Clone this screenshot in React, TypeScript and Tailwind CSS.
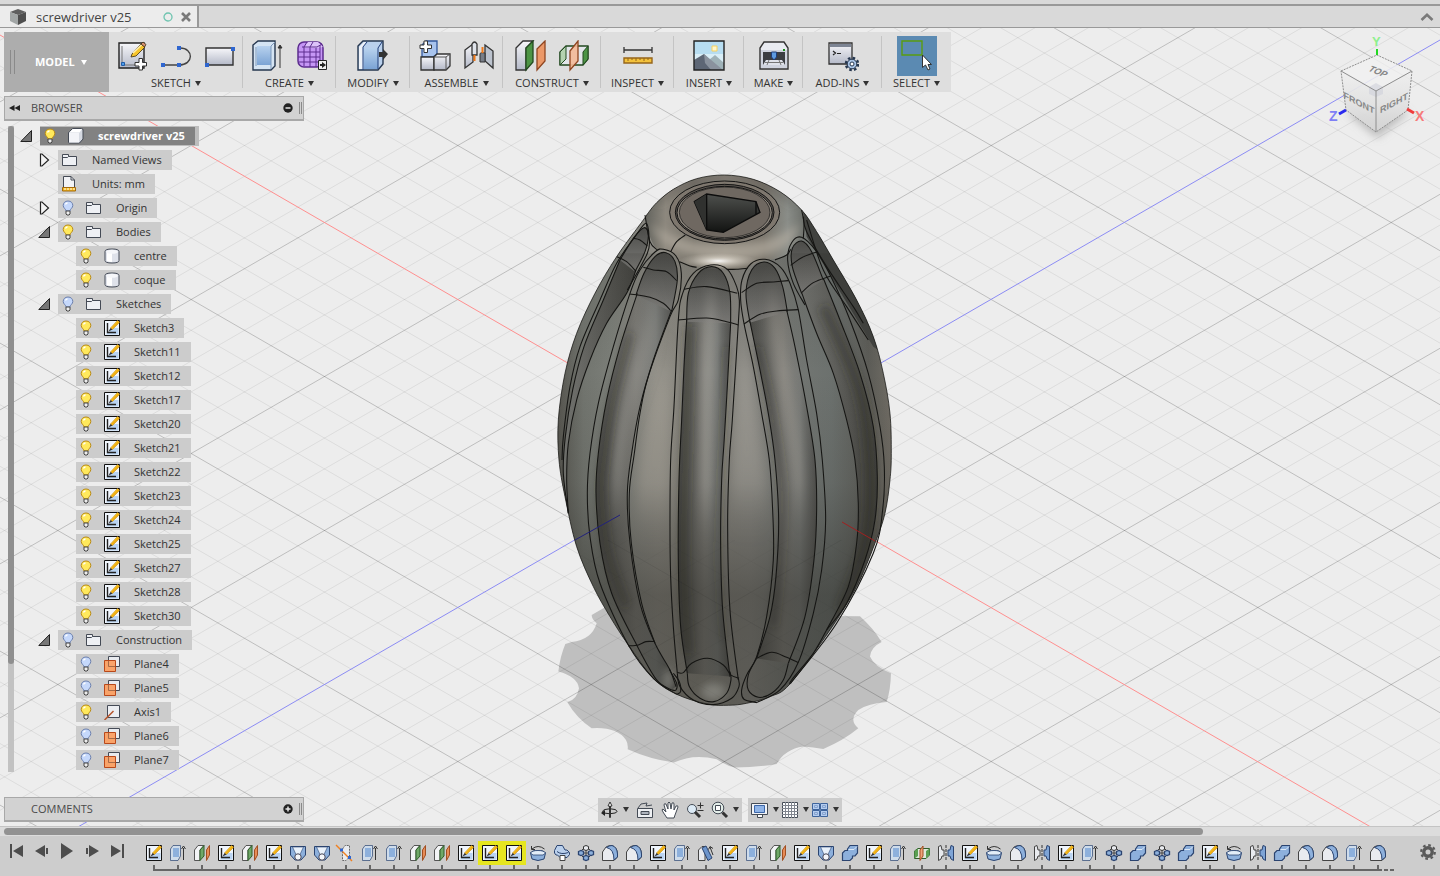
import React from 'react';
import clsx from 'clsx';

type Pt = [number, number];
type IconProps = { className?: string };

// Smooth curve through a list of points
const curve = (pts: Pt[], move = true) => {
  let d = move ? `M${pts[0][0]} ${pts[0][1]}` : `L${pts[0][0]} ${pts[0][1]}`;
  for (let i = 0; i < pts.length - 1; i++) {
    const p0 = pts[i - 1] ?? pts[i];
    const p1 = pts[i];
    const p2 = pts[i + 1];
    const p3 = pts[i + 2] ?? p2;
    d += `C${p1[0] + (p2[0] - p0[0]) / 6} ${p1[1] + (p2[1] - p0[1]) / 6} ${p2[0] - (p3[0] - p1[0]) / 6} ${p2[1] - (p3[1] - p1[1]) / 6} ${p2[0]} ${p2[1]}`;
  }
  return d;
};

const band = (a: Pt[], b: Pt[]) => curve(a) + curve([...b].reverse(), false) + 'Z';

/* ---------- ground grid ---------- */

const ORIGIN = { x: 724.5, y: 453.5 };
const SLOPE = 0.5775;
const STEP = 30.8;

const gridPath = (major: boolean) => {
  let d = '';
  for (let k = -45; k <= 45; k++) {
    if (k === 0 || (k % 5 === 0) !== major) continue;
    const y = ORIGIN.y + k * STEP;
    const l = SLOPE * ORIGIN.x;
    const r = SLOPE * (1440 - ORIGIN.x);
    d += `M0 ${y - l}L1440 ${y + r}M0 ${y + l}L1440 ${y - r}`;
  }
  return d;
};

const Grid = () => (
  <g fill="none">
    <path d={gridPath(false)} stroke="#000" strokeOpacity=".07" />
    <path d={gridPath(true)} stroke="#000" strokeOpacity=".2" />
  </g>
);

/* ---------- handle model ---------- */

const outline: Pt[] = [
  [320, 165], [350, 128], [400, 88], [470, 56], [553, 45], [640, 58], [720, 95], [785, 150], [830, 215], [880, 300], [950, 420],
  [1000, 530], [1030, 640], [1050, 760], [1054, 880], [1050, 960], [1035, 1060], [1005, 1150], [950, 1280], [870, 1410], [750, 1572],
  [690, 1610], [620, 1630], [565, 1636], [500, 1632], [410, 1603], [340, 1555], [265, 1455], [210, 1370], [160, 1280], [110, 1160],
  [75, 1010], [57, 900], [55, 780], [75, 640], [110, 520], [165, 400], [230, 290], [310, 180], [320, 165],
];

const shadow =
  'M190 1345L155 1365Q155 1378 170 1390Q155 1440 95 1446L76 1452Q60 1490 55 1535Q112 1550 117 1585Q112 1618 82 1627Q110 1675 155 1705Q230 1700 258 1740Q265 1752 263 1768Q330 1798 402 1808Q460 1780 530 1798Q560 1818 585 1823Q650 1823 710 1812Q735 1768 790 1760Q820 1762 850 1767Q910 1742 955 1705Q925 1680 955 1650Q985 1630 1040 1626Q1052 1590 1053 1540Q1003 1520 990 1490Q992 1462 1025 1446Q1000 1405 960 1369L860 1368L500 1200Z';

const centerL: Pt[] = [[440, 480], [432, 620], [425, 780], [417, 960], [415, 1200], [422, 1400], [442, 1540]];
const centerR: Pt[] = [[572, 490], [562, 680], [552, 850], [545, 960], [542, 1150], [548, 1350], [570, 1550]];
const leftL: Pt[] = [[292, 400], [240, 560], [200, 720], [175, 880], [168, 1000], [180, 1150], [215, 1300], [290, 1455], [350, 1560], [395, 1590]];
const leftR: Pt[] = [[395, 450], [340, 600], [300, 740], [275, 880], [262, 1000], [270, 1150], [300, 1330], [345, 1450], [390, 1530], [408, 1580]];
const rightL: Pt[] = [[630, 485], [660, 630], [685, 760], [705, 900], [716, 1080], [708, 1250], [690, 1370], [650, 1495]];
const rightR: Pt[] = [[740, 450], [765, 560], [800, 740], [825, 900], [830, 1050], [822, 1200], [795, 1370], [745, 1510]];
const right2L: Pt[] = [[785, 398], [830, 520], [880, 640], [920, 780], [945, 900], [955, 1030], [950, 1150], [925, 1280], [860, 1410]];
const right2R: Pt[] = [[850, 355], [900, 480], [960, 640], [1000, 800], [1012, 950], [1005, 1080], [975, 1200], [920, 1330], [860, 1410]];
const left2L: Pt[] = [[240, 300], [190, 420], [132, 560], [98, 690], [76, 830], [70, 940], [85, 1060]];
const left2R: Pt[] = [[288, 330], [260, 400], [200, 490], [150, 600], [110, 720], [85, 850], [80, 960], [85, 1060]];

const centerArch: Pt[] = [[440, 485], [445, 400], [475, 340], [515, 320], [550, 340], [570, 400], [572, 490]];
const leftArch: Pt[] = [[288, 405], [312, 340], [345, 290], [378, 278], [405, 305], [412, 360], [395, 455]];
const rightArch: Pt[] = [[630, 488], [618, 400], [635, 330], [672, 306], [705, 325], [728, 380], [742, 455]];
const right2Arch: Pt[] = [[785, 400], [757, 320], [757, 265], [785, 243], [815, 275], [850, 360]];
const left2Arch: Pt[] = [[240, 300], [280, 235], [312, 203], [325, 225], [315, 275], [285, 335]];

const edges: Pt[][] = [
  centerL, centerR, leftL, leftR, rightL, rightR, right2L, right2R, left2L, left2R,
  centerArch, leftArch, rightArch, right2Arch, left2Arch,
  // outer rims of the flutes
  [[412, 1540], [400, 1400], [392, 1250], [390, 1100], [392, 900], [402, 740], [415, 480], [428, 400], [460, 340], [512, 315], [562, 328], [590, 380], [598, 420], [595, 490], [577, 780], [568, 900], [563, 1100], [570, 1350], [595, 1560]],
  [[410, 1603], [340, 1555], [265, 1455], [180, 1270], [150, 1130], [142, 1000], [150, 880], [175, 730], [220, 560], [270, 400], [300, 330], [345, 276], [370, 268], [408, 288], [424, 340], [415, 420], [390, 470], [325, 650], [300, 760], [283, 880], [268, 1000], [274, 1150], [305, 1330], [345, 1450]],
  [[650, 1628], [612, 1618], [605, 1590], [620, 1545], [650, 1490], [680, 1370], [700, 1200], [698, 1050], [688, 900], [665, 760], [640, 620], [612, 490], [602, 420], [606, 360], [632, 312], [675, 298], [722, 322], [750, 370], [775, 450], [800, 600], [830, 760], [847, 900], [857, 1080], [845, 1230], [820, 1360], [775, 1507], [720, 1590], [650, 1628]],
  [[795, 435], [760, 370], [743, 300], [755, 248], [785, 232], [830, 275], [872, 348], [930, 480], [985, 640], [1020, 800], [1033, 920], [1028, 1050], [1000, 1180], [890, 1390], [752, 1570]],
  [[66, 900], [70, 830], [90, 680], [120, 560], [180, 420], [230, 310], [285, 230], [318, 190], [327, 230], [322, 280], [262, 390]],
  [[800, 180], [850, 330], [920, 440], [985, 540]],
  [[790, 170], [800, 215], [860, 320], [940, 440], [970, 490]],
  // cross sections near the top
  [[432, 388], [500, 380], [592, 400]],
  [[415, 480], [500, 474], [560, 485], [595, 495]],
  [[310, 322], [340, 330], [380, 335], [410, 362]],
  [[270, 402], [330, 412], [370, 430], [392, 452]],
  [[605, 398], [650, 370], [700, 366], [745, 362]],
  [[612, 492], [660, 463], [710, 453], [775, 449]],
  [[752, 316], [785, 293], [832, 275]],
  [[785, 398], [820, 368], [872, 348]],
  [[280, 235], [300, 240], [322, 258]],
  [[230, 290], [260, 305], [287, 333]],
  // bottom caps
  [[412, 1538], [430, 1538], [455, 1510], [503, 1495], [550, 1515], [572, 1545], [597, 1555]],
  [[442, 1540], [448, 1580], [480, 1615], [522, 1625], [560, 1600], [573, 1560], [570, 1535]],
  [[412, 1540], [420, 1580], [460, 1620], [520, 1634], [575, 1615], [597, 1580], [595, 1555]],
  [[650, 1495], [695, 1477], [740, 1492], [775, 1508]],
  [[650, 1495], [625, 1545], [625, 1590], [655, 1612], [695, 1600], [730, 1560], [745, 1510]],
  [[265, 1458], [295, 1455], [318, 1445], [345, 1445]],
  [[395, 1590], [408, 1590], [410, 1570], [388, 1528]],
  [[410, 1603], [422, 1595], [418, 1565], [400, 1540]],
  [[860, 1410], [820, 1480], [755, 1560], [752, 1572]],
  // edge under the cap
  [[315, 165], [330, 245], [352, 270]],
  [[418, 305], [450, 318], [470, 322]],
  [[560, 328], [590, 328], [622, 325]],
  [[705, 300], [740, 285], [752, 268]],
  [[785, 150], [792, 190], [790, 235]],
  [[392, 275], [410, 245], [436, 225]],
];

const Stops = ({ list }: { list: [number, string][] }) => (
  <>
    {list.map(([offset, color]) => (
      <stop key={offset} offset={offset} stopColor={color} />
    ))}
  </>
);

const Handle = () => (
  <g transform="translate(540 160) scale(.3333)">
    <defs>
      <linearGradient id="shell" x1="50" x2="1055" y1="0" y2="0" gradientUnits="userSpaceOnUse">
        <Stops list={[[0, '#55544e'], [0.08, '#72756f'], [0.16, '#7b7e78'], [0.3, '#8c8a83'], [0.42, '#86847c'], [0.58, '#868580'], [0.7, '#747773'], [0.82, '#6c716e'], [0.93, '#5c5c57'], [1, '#716d65']]} />
      </linearGradient>
      <linearGradient id="flute">
        <Stops list={[[0, '#4b4b47'], [0.2, '#5f5f5b'], [0.5, '#7b7a75'], [0.75, '#777976'], [1, '#51514e']]} />
      </linearGradient>
      <linearGradient id="fluteTop" x1="0" x2="0" y1="0" y2="1">
        <Stops list={[[0, '#4b4b48'], [0.5, '#646461'], [1, '#7c7b78']]} />
      </linearGradient>
      <linearGradient id="fluteSide">
        <Stops list={[[0, '#747571'], [0.6, '#575753'], [1, '#444440']]} />
      </linearGradient>
      <linearGradient id="depth" x1="0" x2="0" y1="300" y2="1640" gradientUnits="userSpaceOnUse">
        <stop offset="0" stopColor="#22211c" stopOpacity=".12" />
        <stop offset=".25" stopColor="#22211c" stopOpacity="0" />
        <stop offset=".5" stopColor="#22211c" stopOpacity=".1" />
        <stop offset=".75" stopColor="#22211c" stopOpacity=".45" />
        <stop offset="1" stopColor="#22211c" stopOpacity=".42" />
      </linearGradient>
      <linearGradient id="cap" x1="320" x2="790" y1="0" y2="0" gradientUnits="userSpaceOnUse">
        <Stops list={[[0, '#65655f'], [0.12, '#8d887e'], [0.3, '#77736a'], [0.5, '#8a857b'], [0.75, '#777269'], [0.9, '#8a8d88'], [1, '#6d706b']]} />
      </linearGradient>
      <radialGradient id="shine">
        <stop offset="0" stopColor="#fff" stopOpacity=".95" />
        <stop offset=".4" stopColor="#e6e0d5" stopOpacity=".6" />
        <stop offset="1" stopColor="#c9c2b5" stopOpacity="0" />
      </radialGradient>
      <linearGradient id="socket" x1="0" x2="0" y1="0" y2="1">
        <Stops list={[[0, '#4e504d'], [1, '#121312']]} />
      </linearGradient>
      <clipPath id="body">
        <path d={curve(outline)} />
      </clipPath>
      <filter id="soft" filterUnits="userSpaceOnUse" x="0" y="0" width="1110" height="1700">
        <feGaussianBlur stdDeviation="12" />
      </filter>
      <filter id="softer" filterUnits="userSpaceOnUse" x="0" y="0" width="1110" height="1700">
        <feGaussianBlur stdDeviation="14 60" />
      </filter>
    </defs>

    <path d={curve(outline)} fill="url(#shell)" />
    <g clipPath="url(#body)">
      <path d={curve([[345, 640], [320, 760], [303, 880], [290, 1000], [294, 1050]]) + 'L385 1050L388 900L395 640Z'} fill="#aaa69b" fillOpacity=".55" filter="url(#softer)" />
      <path d="M600 560L580 900L578 1020L685 1020L670 900L630 640Z" fill="#aba79f" fillOpacity=".5" filter="url(#softer)" />
      <path d="M788 150L800 230L870 345L1000 560L1060 600L1000 350L830 150Z" fill="#41423f" />
      {[[left2L, left2R, left2Arch], [right2L, right2R, right2Arch]].map(([l, r, arch], i) => (
        <g key={i}>
          <path d={band(l, r)} fill="url(#fluteSide)" />
          <path d={curve(arch) + 'Z'} fill="url(#fluteTop)" />
        </g>
      ))}
      {[[leftL, leftR, leftArch], [centerL, centerR, centerArch], [rightL, rightR, rightArch]].map(([l, r, arch], i) => (
        <g key={i}>
          <path d={band(l, r)} fill="url(#flute)" />
          <path d={curve(arch) + 'Z'} fill="url(#fluteTop)" />
        </g>
      ))}
      {/* soft reflections running down the flutes */}
      <g fill="none" filter="url(#softer)" strokeOpacity=".5">
        <path d={curve([[350, 460], [300, 620], [255, 760], [235, 900], [228, 1020]])} stroke="#b0aea8" strokeWidth="28" />
        <path d={curve([[515, 420], [505, 620], [500, 850], [498, 1060]])} stroke="#bab8b2" strokeWidth="28" />
        <path d={curve([[690, 440], [730, 640], [765, 850], [780, 1020]])} stroke="#b3aea6" strokeWidth="26" />
      </g>
      <g fill="none" filter="url(#soft)" strokeOpacity=".45">
        <path d={curve([[270, 520], [220, 720], [192, 900], [185, 1000], [205, 1180], [260, 1340]])} stroke="#2b2b28" strokeWidth="20" />
        <path d={curve([[448, 500], [440, 800], [432, 1200], [445, 1480]])} stroke="#2b2b28" strokeWidth="22" />
        <path d={curve([[560, 560], [545, 900], [535, 1200], [550, 1440]])} stroke="#2b2b28" strokeWidth="10" />
        <path d={curve([[650, 560], [695, 760], [726, 980], [720, 1200], [700, 1400]])} stroke="#2b2b28" strokeWidth="18" />
        <path d={curve([[850, 440], [960, 700], [990, 950], [975, 1150], [900, 1350]])} stroke="#2b2b28" strokeWidth="30" />
      </g>
      <path d="M0 280H1110V1700H0Z" fill="url(#depth)" />
      <ellipse cx="520" cy="1595" rx="36" ry="26" fill="#a0a09a" fillOpacity=".5" filter="url(#soft)" />
      <ellipse cx="385" cy="1560" rx="14" ry="34" fill="#a0a09a" fillOpacity=".6" filter="url(#soft)" />
      {/* cap */}
      <path d="M320 160Q390 50 553 45Q710 50 785 150Q795 190 790 232Q745 260 740 285Q705 300 675 300Q640 305 622 325L560 328Q515 312 470 322Q440 318 418 305Q400 270 370 268L352 270Q325 240 315 165Z" fill="url(#cap)" />
      <path d="M330 190Q360 260 470 290Q560 315 680 285Q760 260 780 190Q700 255 550 255Q400 250 330 190Z" fill="#b8b1a4" fillOpacity=".65" filter="url(#soft)" />
      <path d="M350 128Q430 60 553 52Q680 55 760 130" fill="none" stroke="#55544e" strokeWidth="14" strokeOpacity=".6" filter="url(#soft)" />
      <ellipse cx="535" cy="303" rx="120" ry="24" fill="url(#shine)" />
      <ellipse cx="554" cy="157" rx="165" ry="94" fill="#7e776e" stroke="#141414" strokeWidth="3" />
      <ellipse cx="554" cy="157" rx="148" ry="84" fill="#5c5751" stroke="#141414" strokeWidth="3" />
      <ellipse cx="554" cy="158" rx="143" ry="79" fill="#8c857c" stroke="#141414" strokeWidth="3" />
      <ellipse cx="554" cy="157" rx="136" ry="76" fill="#6f6861" stroke="#141414" strokeWidth="2" />
      <path d="M463 125L500 102L648 125L660 157L550 217L500 210Z" fill="url(#socket)" stroke="#0c0c0c" strokeWidth="4" />
      <path d="M463 125L500 102V210Z" fill="#30312f" />
      <path d="M500 102V210M648 125V162" stroke="#0c0c0c" strokeWidth="4" />
    </g>
    <g fill="none" stroke="#151513" strokeWidth="3.2">
      {edges.map((pts, i) => (
        <path key={i} d={curve(pts)} />
      ))}
      <path d={curve(outline)} strokeWidth="3" strokeOpacity=".75" />
    </g>
  </g>
);

const Scene = () => (
  <svg className="absolute inset-0 h-full w-full" viewBox="0 28 1440 798" preserveAspectRatio="xMidYMid slice" role="img" aria-label="Model view">
    <path d={shadow} transform="translate(540 160) scale(.3333)" fill="#bfbfbf" />
    <Grid />
    <path d="M0 35L1440 867" stroke="#ff8f8f" />
    <path d="M0 872L1440 40" stroke="#8c8cf4" />
    <Handle />
    <g clipPath="url(#lower)" opacity=".35">
      <Grid />
    </g>
    <clipPath id="lower">
      <path d="M575 540H876L857 587L830 630L790 684L747 703L713 705L677 695L653 680L628 645L593 587Z" />
    </clipPath>
    <path d="M575 540L620 515" stroke="#22227c" />
    <path d="M842 522L875 541" stroke="#a02020" />
  </svg>
);

const ViewCube = () => (
  <svg className="h-28 w-28 font-['Liberation_Sans']" viewBox="1326 34 112 112">
    <defs>
      <linearGradient id="face" x1="0" x2="0" y1="0" y2="1">
        <Stops list={[[0, '#efefef'], [1, '#d6d6d6']]} />
      </linearGradient>
      <filter id="cubeShade" x="-50%" y="-50%" width="200%" height="200%">
        <feGaussianBlur stdDeviation="4" />
      </filter>
    </defs>
    <path d="M1346 112L1377 138L1410 112Z" fill="#999" fillOpacity=".6" filter="url(#cubeShade)" />
    <path d="M1341 71L1376 91V132L1346 110Z" fill="url(#face)" fillOpacity=".92" />
    <path d="M1412 71L1376 91V132L1408 110Z" fill="url(#face)" fillOpacity=".92" />
    <path d="M1341 71L1377 55L1412 71L1376 91Z" fill="#f0f0f0" fillOpacity=".85" />
    <path d="M1376 83L1383 87V94L1376 97L1369 94V87Z" fill="#cfd1da" fillOpacity=".6" />
    <path d="M1341 71L1377 55L1412 71L1408 110L1376 132L1346 110Z" fill="none" stroke="#8e8e8e" strokeDasharray="2 1" />
    <path d="M1341 71L1376 91L1412 71M1376 91V132" fill="none" stroke="#8e8e8e" />
    <path d="M1377 49V55" stroke="#22d822" strokeWidth="2" />
    <path d="M1339 114L1346 110" stroke="#2a2af0" strokeWidth="3" />
    <path d="M1407 109L1414 113" stroke="#f03c3c" strokeWidth="3" />
    <text x="1372" y="46" fontSize="13" fill="#8ef08e" className="font-bold">Y</text>
    <text x="1329" y="121" fontSize="14" fill="#7f7ff5" className="font-bold">Z</text>
    <text x="1415" y="121" fontSize="14" fill="#f77a7a" className="font-bold">X</text>
    <g fill="#868686" fontSize="9" className="font-['Liberation_Sans_Narrow','Liberation_Sans'] font-bold">
      <text textAnchor="middle" transform="translate(1359 106) skewY(28)">FRONT</text>
      <text textAnchor="middle" transform="translate(1394 106) skewY(-28)">RIGHT</text>
      <text textAnchor="middle" transform="translate(1376 74) rotate(22) skewX(-20)">TOP</text>
    </g>
  </svg>
);

/* ---------- toolbar icons, 32px ---------- */

const Big = ({ children }: { children: React.ReactNode }) => (
  <svg className="h-8 w-8 shrink-0" viewBox="0 0 32 32" fill="none">
    <defs>
      <linearGradient id="steel" x1="0" x2="0" y1="0" y2="1">
        <Stops list={[[0, '#f7f7fa'], [1, '#b4b9c8']]} />
      </linearGradient>
      <linearGradient id="blue" x1="0" x2="0" y1="0" y2="1">
        <Stops list={[[0, '#b8d2ee'], [1, '#7ba3d4']]} />
      </linearGradient>
    </defs>
    {children}
  </svg>
);

const NewSketchIcon = () => (
  <Big>
    <path d="M3 3H28V28H3Z" fill="url(#steel)" stroke="#222" strokeWidth="1.4" />
    <path d="M6 6V25H25" stroke="#777" />
    <path d="M5.500 22.500h3v3h-3z" fill="#4d9be8" stroke="#1f5ca8" />
    <path d="M16 14L25 4L29 7L20 16L15 17Z" fill="#f7c52c" stroke="#3b2c10" strokeWidth=".8" />
    <path d="M17 13L26 4.500" stroke="#fdeeb0" strokeWidth="1.500" />
    <path d="M25 4L27 2L30 4.500L28.500 7Z" fill="#d99273" stroke="#3b2c10" strokeWidth=".8" />
    <path d="M23 18.500h3.500v4h4v3.500h-4v4H23v-4h-4v-3.500h4z" fill="#fff" stroke="#333" />
  </Big>
);
const LineIcon = () => (
  <Big>
    <path d="M3 25H19C34 25 34 8 20 8" stroke="#444" strokeWidth="1.400" />
    <path d="M1 23h4v4H1zM17 23h4v4h-4zM17 6h4v4h-4z" fill="#2f66cf" />
  </Big>
);
const RectIcon = () => (
  <Big>
    <path d="M2 8H29V25H2Z" fill="url(#steel)" stroke="#333" strokeWidth="1.400" />
    <path d="M1 23h4v4H1zM27 7h4v4h-4z" fill="#2f66cf" />
  </Big>
);
const ExtrudeBigIcon = () => (
  <Big>
    <path d="M1 5L6 1H23V26L19 30H1Z" fill="#d5e4f3" stroke="#26374f" strokeWidth="1.400" />
    <path d="M5 6H19V25H5Z" fill="url(#blue)" />
    <path d="M19 6L23 2M19 6V29M4 26V7" stroke="#7d98bb" />
    <path d="M28 28V7M26 8L28 5L30 8Z" stroke="#333" fill="#333" />
  </Big>
);
const FormIcon = () => (
  <Big>
    <rect x="2" y="2" width="25" height="25" rx="6" fill="#c596f5" stroke="#5c2c8f" strokeWidth="1.500" />
    <path d="M8 7L12 2H22L27 7L21 8H8Z" fill="#dcc2fa" />
    <path d="M8 7V26M14 7V27M20 8V27M24 5V24M2 12H24M2 17H24M3 22H24M6 7H21L26 4M11 2L8 7M17 2L14 7" stroke="#5c2c8f" />
    <path d="M22.500 20.500h8v9h-8z" fill="#eee" stroke="#222" />
    <path d="M24 24h2v-2l4 3-4 3v-2h-2z" fill="#222" />
  </Big>
);
const ModifyIcon = () => (
  <Big>
    <path d="M1 6L6 1H26V24L21 30H1Z" fill="#b9d0ec" stroke="#26374f" strokeWidth="1.400" />
    <path d="M2 7L7 2H9L6 8V29H2Z" fill="#eef2f8" />
    <path d="M7 8H21V29H7Z" fill="url(#blue)" />
    <path d="M6 30V7L10 2M21 29V8L25 2" stroke="#1f3c78" />
    <path d="M22 12h4V9l5 5-5 6v-3h-4z" fill="#333" />
  </Big>
);
const ComponentIcon = () => (
  <Big>
    <path d="M3 17V5L7 1H18V14L14 17Z" fill="#a9c4ee" stroke="#33589c" strokeWidth="1.300" />
    <path d="M2 17H15V30H2Z" fill="url(#steel)" stroke="#333" strokeWidth="1.300" />
    <path d="M15 17L18 14H31V26L27 30H15Z" fill="url(#steel)" stroke="#333" strokeWidth="1.300" />
    <path d="M15 17H27V30M27 17L31 14" stroke="#555" />
    <path d="M5 1h3.500v4h4v3.500h-4v4H5v-4H1V5h4z" fill="#fff" stroke="#333" />
  </Big>
);
const JointIcon = () => (
  <Big>
    <path d="M2 10L10 4V22L2 28Z" fill="url(#steel)" stroke="#333" strokeWidth="1.300" />
    <path d="M9 4Q11.500 0 14 4V15H9Z" fill="#dfe3ea" stroke="#333" strokeWidth="1.300" />
    <path d="M22 5L30 11V28L22 21Z" fill="#bcc3ce" stroke="#333" strokeWidth="1.300" />
    <path d="M17 14Q17 12 22 13V22H17Z" fill="#777d87" stroke="#333" />
    <path d="M11.500 15V21M19.500 7V13" stroke="#f07818" strokeWidth="2" />
  </Big>
);
const PlaneBigIcon = () => (
  <Big>
    <path d="M2 8L9 1H19L12 8V30H2Z" fill="url(#steel)" stroke="#333" strokeWidth="1.300" />
    <path d="M12 8L19 1V22L12 30Z" fill="#4c9445" stroke="#234a20" strokeWidth="1.300" />
    <path d="M23 9L31 1V21L23 30Z" fill="#eb9868" stroke="#8f4520" strokeWidth="1.300" />
  </Big>
);
const MidplaneBigIcon = () => (
  <Big>
    <path d="M2 12L8 6H30V19L25 25H2Z" fill="#e3e6ea" stroke="#234a20" strokeWidth="1.300" />
    <path d="M2 12L8 6V19L2 25Z" fill="#b4d3b0" stroke="#234a20" />
    <path d="M25 12L30 6V19L25 25Z" fill="#4c9445" stroke="#234a20" />
    <path d="M12 11L20 1V21L12 30Z" fill="#f3b998" fillOpacity=".9" stroke="#8f4520" strokeWidth="1.300" />
  </Big>
);
const InspectIcon = () => (
  <Big>
    <path d="M2 10H30M2 7V13M30 7V13" stroke="#333" strokeWidth="1.300" />
    <path d="M2 18H30V23H2Z" fill="#f3c23c" stroke="#96651a" strokeWidth="1.400" />
    <path d="M6 18v3M10 18v2M14 18v3M18 18v2M22 18v3M26 18v2" stroke="#96651a" />
  </Big>
);
const InsertIcon = () => (
  <Big>
    <path d="M1 1H31V30H1Z" fill="#b7ddf1" />
    <path d="M1 14H31V24H1Z" fill="#d9eef7" />
    <path d="M19 6h5v5h-5z" fill="#fff6c8" stroke="#f5d061" />
    <path d="M1 20L11 14L26 30H1Z" fill="#5d6675" />
    <path d="M16 20L22 15L31 23V30H25Z" fill="#9fb2b8" />
    <path d="M11 14L30 30H18L12 23Z" fill="#8a929e" />
    <path d="M1 1H31V30H1Z" stroke="#222" strokeWidth="1.400" />
  </Big>
);
const MakeIcon = () => (
  <Big>
    <path d="M6 2H26L30 8V29H2V8Z" fill="#e9ebf1" stroke="#333" strokeWidth="1.400" />
    <path d="M3 10H29V28H3Z" fill="#cfd3de" />
    <path d="M5 12H27V25H5Z" fill="#3b3d42" />
    <path d="M8 20H24L27 25H5Z" fill="#dfe2ea" />
    <path d="M7 22.500H25M11 20L9 25M21 20L23 25" stroke="#777" />
    <path d="M13.500 12H18.500V17L16 20L13.500 17Z" fill="#5d9ae0" stroke="#1f3c78" />
    <path d="M25 9h2v2h-2z" fill="#1a8c1a" />
  </Big>
);
const AddInsIcon = () => (
  <Big>
    <path d="M2 3H25V24H2Z" fill="url(#steel)" stroke="#333" strokeWidth="1.300" />
    <path d="M3 4H24V7H3Z" fill="#7d8594" />
    <path d="M6 11L8.500 13L6 15M10 13.500H14" stroke="#222" strokeWidth="1.200" />
    <circle cx="25" cy="24" r="6" stroke="#26374f" strokeWidth="2.600" strokeDasharray="2.500 2.200" />
    <circle cx="25" cy="24" r="4.800" fill="#a9c4e6" stroke="#26374f" />
    <circle cx="25" cy="24" r="2" fill="#fff" stroke="#26374f" />
  </Big>
);
const SelectIcon = () => (
  <span className="flex h-10 w-10 items-center justify-center bg-[#5b8ab2]">
    <Big>
      <path d="M1 1H21V15H1Z" stroke="#5a9c10" strokeWidth="1.400" />
      <path d="M21.500 15V27.500L24.500 25L27 30L29 29L27 24.500H30.500Z" fill="#fff" stroke="#333" />
    </Big>
  </span>
);

const Caret = ({ className }: IconProps) => (
  <svg className={clsx('h-[5px] w-[6px] shrink-0', className)} viewBox="0 0 6 5">
    <path d="M0 0H6L3 5Z" fill="currentColor" />
  </svg>
);

const groups = [
  { label: 'SKETCH', width: 'w-[134px]', icons: [NewSketchIcon, LineIcon, RectIcon] },
  { label: 'CREATE', width: 'w-[93px]', icons: [ExtrudeBigIcon, FormIcon] },
  { label: 'MODIFY', width: 'w-[74px]', icons: [ModifyIcon] },
  { label: 'ASSEMBLE', width: 'w-[93px]', icons: [ComponentIcon, JointIcon] },
  { label: 'CONSTRUCT', width: 'w-[98px]', icons: [PlaneBigIcon, MidplaneBigIcon] },
  { label: 'INSPECT', width: 'w-[73px]', icons: [InspectIcon] },
  { label: 'INSERT', width: 'w-[70px]', icons: [InsertIcon] },
  { label: 'MAKE', width: 'w-[59px]', icons: [MakeIcon] },
  { label: 'ADD-INS', width: 'w-[79px]', icons: [AddInsIcon] },
  { label: 'SELECT', width: 'w-[69px]', icons: [SelectIcon] },
];

const Toolbar = () => (
  <div className="flex h-[60px] w-max bg-[#dedede]">
    <button className="flex w-[105px] items-center bg-[#adadad] pl-1.5 text-white">
      <span className="h-6 w-[5px] border-x border-[#8a8a8a]" />
      <span className="ml-5 text-[11px] font-bold">MODEL</span>
      <Caret className="ml-1.5" />
    </button>
    {groups.map((g, i) => (
      <div key={g.label} className="flex">
        <div className={clsx('flex flex-col items-center', g.width)}>
          <div className="flex h-12 items-center gap-3">
            {g.icons.map((Icon, n) => (
              <button key={n} aria-label={`${g.label} ${n + 1}`}>
                <Icon />
              </button>
            ))}
          </div>
          <button className="-mt-[5px] flex h-4 items-center gap-1 text-[11px] font-medium leading-4 text-[#333]">
            {g.label}
            <Caret />
          </button>
        </div>
        {i < groups.length - 1 && <span className="-ml-px mt-1 h-[52px] w-px bg-[#c4c4c4]" />}
      </div>
    ))}
  </div>
);

/* ---------- browser tree ---------- */

const Bulb = ({ on }: { on: boolean }) => (
  <svg className="h-4 w-3" viewBox="0 0 12 16">
    <path d="M6 1C3 1 1.200 3 1.200 5.500C1.200 8 4 9 4 11H8C8 9 10.800 8 10.800 5.500C10.800 3 9 1 6 1Z" fill={on ? '#ffe95c' : '#c5d8fb'} stroke={on ? '#b98a16' : '#6c80ad'} />
    <path d="M3.500 4.500Q4 3 5.500 3" stroke="#fff" strokeWidth="1.300" fill="none" />
    <path d="M4 11H8V14L7 15H5L4 14Z" fill="#eee" stroke="#444" />
  </svg>
);

const FolderIcon = () => (
  <svg className="h-4 w-4" viewBox="0 0 16 16">
    <path d="M.500 13.500V2.500H6.500V4.500H14.500V13.500Z" fill="#eef0f4" stroke="#444a55" />
    <path d="M.500 5.500H5.500L6.500 4.500" stroke="#444a55" fill="none" />
  </svg>
);
const UnitsIcon = () => (
  <svg className="h-4 w-4" viewBox="0 0 16 16">
    <path d="M1.500 12V.500H9L12.500 4V12Z" fill="#f2f3f6" stroke="#444a55" />
    <path d="M9 .500V4H12.500" fill="none" stroke="#444a55" />
    <path d="M.500 11.500H13.500V15H.500Z" fill="#f6b81c" stroke="#a36a0c" />
    <path d="M3 12v2M6 12v2M9 12v2M12 12v2" stroke="#fff" />
  </svg>
);
const CubeIcon = () => (
  <svg className="h-4 w-4" viewBox="0 0 16 16">
    <path d="M.500 5Q.500 4 1.500 3.500L4.500 .500H13.500Q15 .500 15 2V11L11.500 15H1.500Q.500 15 .500 14Z" fill="#d6dae2" stroke="#444a55" />
    <path d="M1 5H11V14.500H1Z" fill="#f3f4f8" />
    <path d="M1.500 4.500L5 1H14L11.500 4.500Z" fill="#fff" />
  </svg>
);
const CylinderIcon = () => (
  <svg className="h-4 w-4" viewBox="0 0 16 16">
    <path d="M1 3.500Q1 1 8 1Q15 1 15 3.500V12.500Q15 15 8 15Q1 15 1 12.500Z" fill="#dfe2ea" stroke="#454b57" />
    <path d="M3 5H8V14Q5 14 3 13Z" fill="#fff" />
    <ellipse cx="8" cy="3.800" rx="6" ry="2" fill="#f6f7fa" />
  </svg>
);
const SketchIcon = () => (
  <svg className="h-4 w-4" viewBox="0 0 16 16">
    <path d="M.5.5H15.500V15.500H.5Z" fill="#f0f6fd" stroke="#111" />
    <path d="M8 8H14.500V14.500H2Z" fill="#b9d3f2" />
    <path d="M3.500 3V12.500H12" fill="none" stroke="#222" strokeWidth="1.400" />
    <path d="M6.500 8L13.500 .500L15.500 2.500L8.500 9.500Z" fill="#f9c51a" stroke="#c88a14" strokeWidth=".6" />
    <path d="M8 8.500L15 1.500" stroke="#e89a10" />
    <path d="M4.500 11.500L6.500 8L8.500 9.500Z" fill="#333" />
  </svg>
);
const PlaneIcon = () => (
  <svg className="h-4 w-4" viewBox="0 0 16 16">
    <path d="M4.500 10.500V.500H15.500V10.500Z" fill="#e9ebef" stroke="#454b57" />
    <path d="M.500 4.500H11.500V15.500H.500Z" fill="#fba063" fillOpacity=".95" stroke="#b8481a" />
    <path d="M4.500 5V10.500H11" fill="none" stroke="#a66a47" />
  </svg>
);
const AxisIcon = () => (
  <svg className="h-4 w-4" viewBox="0 0 16 16">
    <path d="M3.500 1.500H15.500V13.500H3.500Z" fill="#eceef2" stroke="#454b57" />
    <path d="M.500 16L9.500 7" stroke="#b4532a" strokeWidth="1.500" />
  </svg>
);

type Node = { name: string; level: 0 | 1 | 2; icon: React.FC; bulb?: 'on' | 'off'; open?: boolean };

const sketchNumbers = [3, 11, 12, 17, 20, 21, 22, 23, 24, 25, 27, 28, 30];

const tree: Node[] = [
  { name: 'screwdriver v25', level: 0, icon: CubeIcon, bulb: 'on', open: true },
  { name: 'Named Views', level: 1, icon: FolderIcon, open: false },
  { name: 'Units: mm', level: 1, icon: UnitsIcon },
  { name: 'Origin', level: 1, icon: FolderIcon, bulb: 'off', open: false },
  { name: 'Bodies', level: 1, icon: FolderIcon, bulb: 'on', open: true },
  { name: 'centre', level: 2, icon: CylinderIcon, bulb: 'on' },
  { name: 'coque', level: 2, icon: CylinderIcon, bulb: 'on' },
  { name: 'Sketches', level: 1, icon: FolderIcon, bulb: 'off', open: true },
  ...sketchNumbers.map((n): Node => ({ name: `Sketch${n}`, level: 2, icon: SketchIcon, bulb: 'on' })),
  { name: 'Construction', level: 1, icon: FolderIcon, bulb: 'off', open: true },
  { name: 'Plane4', level: 2, icon: PlaneIcon, bulb: 'off' },
  { name: 'Plane5', level: 2, icon: PlaneIcon, bulb: 'off' },
  { name: 'Axis1', level: 2, icon: AxisIcon, bulb: 'on' },
  { name: 'Plane6', level: 2, icon: PlaneIcon, bulb: 'off' },
  { name: 'Plane7', level: 2, icon: PlaneIcon, bulb: 'off' },
];

const Toggle = ({ open }: { open: boolean }) => (
  <button className="h-4 w-3" aria-label={open ? 'Collapse' : 'Expand'}>
    <svg className="h-4 w-3" viewBox="0 0 12 16">
      {open ? (
        <path d="M.800 13.500H11.500V2.500Z" fill="#777" stroke="#222" />
      ) : (
        <path d="M2.500 2V14H4L10.500 8L4 2Z" fill="#f3f3f3" stroke="#222" strokeWidth="1.200" />
      )}
    </svg>
  </button>
);

const TreeRow = ({ node }: { node: Node }) => {
  const Icon = node.icon;
  const root = node.level === 0;
  return (
    <li className={clsx('flex h-6 items-center', root && 'pl-1.5', node.level === 1 && 'pl-6', node.level === 2 && 'pl-[42px]')}>
      <span className="flex w-5">{node.open !== undefined && <Toggle open={node.open} />}</span>
      <div className={clsx(root ? 'border-y border-r-4 border-[#bdbdbd] bg-[#828282] pr-2.5 text-white' : 'bg-[#cccccc] pr-2.5 text-[#333]', 'flex h-5 items-center pl-1')}>
        {node.bulb && (
          <button className="mr-3" aria-label={`Toggle ${node.name}`}>
            <Bulb on={node.bulb === 'on'} />
          </button>
        )}
        <Icon />
        <span className={clsx('ml-3.5 text-[11px] leading-4', root ? 'font-bold' : 'font-medium')}>{node.name}</span>
      </div>
    </li>
  );
};

const PanelHeader = ({ title, open }: { title: string; open: boolean }) => (
  <div className="flex h-[25px] w-[300px] items-center border border-b-2 border-[#a8a8a8] bg-[#d2d2d2] pl-1 text-[11px] font-medium text-[#4a4a4a]">
    <svg className="h-2 w-3" viewBox="0 0 12 8">
      {open && <path d="M5.500 1V7L0 4ZM11 1V7L5.500 4Z" fill="#222" />}
    </svg>
    <h2 className="ml-2.5 flex-1">{title}</h2>
    <button aria-label={open ? `Collapse ${title}` : `Expand ${title}`}>
      <svg className="h-[10px] w-[10px]" viewBox="0 0 10 10">
        <circle cx="5" cy="5" r="4.700" fill="#222" />
        <path d={open ? 'M2.500 5H7.500' : 'M2.500 5H7.500M5 2.500V7.500'} stroke="#e6e6e6" strokeWidth="1.500" />
      </svg>
    </button>
    <span className="ml-1.5 mr-px h-3 w-[3px] border-x border-[#8a8a8a]" />
  </div>
);

/* ---------- navigation bar ---------- */

const Nav = ({ label, caret, children }: { label: string; caret?: boolean; children: React.ReactNode }) => (
  <button className="flex items-center gap-1 text-[#333]" aria-label={label}>
    <svg className="h-[18px] w-[18px]" viewBox="0 0 18 18" fill="none" stroke="#444b55">
      {children}
    </svg>
    {caret && <Caret />}
  </button>
);

const NavBar = () => (
  <div className="flex gap-1.5">
    <div className="flex h-6 items-center gap-[7px] bg-[#cccccc] px-[3px]">
      <Nav label="Orbit" caret>
        <path d="M3 12Q0 10 4 8.500Q9 7 14 8.500Q18 10.500 14 12Q9 13.500 3 12" stroke="#222" />
        <path d="M8.500 16.500V5H7L9 1L11 5H9.500V16.500Z" stroke="#333" fill="#fff" />
        <path d="M4 9L0 12L4 15Z" fill="#222" stroke="none" />
      </Nav>
      <Nav label="Look at">
        <path d="M1.500 7.500H16.500V16.500H1.500Z" fill="#eef0f3" />
        <path d="M5 10.500H13V13.500H5Z" fill="#aeb4bd" />
        <path d="M2 7L5 3L11 2L10 5L16 4" />
      </Nav>
      <Nav label="Pan">
        <path d="M6 17L2 11Q0 8 2 8L5 11L3 4Q3 2 5 3L7 8L7 2Q8 0 9 2L10 8L11 2Q13 1 13 3L13 9L15 5Q17 4 17 6L14 14L13 17Z" fill="#fff" />
      </Nav>
      <Nav label="Zoom">
        <circle cx="6" cy="8" r="4.500" fill="#dceaf5" />
        <path d="M9 11L14 16" stroke="#333" strokeWidth="3" />
        <path d="M11.500 4.500H17.500M14.500 1.500V7.500M11.500 9.500H17.500" stroke="#333" />
      </Nav>
      <Nav label="Fit" caret>
        <circle cx="7" cy="7" r="5.800" fill="#e3eee9" />
        <path d="M4.500 4.500H9.500V9.500H4.500Z" fill="#fff" />
        <path d="M11.500 11.500L16 16" stroke="#333" strokeWidth="3" />
      </Nav>
    </div>
    <div className="flex h-6 items-center gap-0.5 bg-[#cccccc] px-[3px]">
      <Nav label="Display settings" caret>
        <path d="M.500 2.500H16.500V13.500H.500Z" fill="#f1f3f7" />
        <path d="M3.500 4.500H13.500V11.500H3.500Z" fill="#8fb4e8" stroke="#3c66a8" />
        <path d="M6.500 14V16.500H11.500V14" fill="#fff" />
      </Nav>
      <Nav label="Grid settings" caret>
        <path d="M1.500 1.500H16.500V16.500H1.500Z" fill="#fff" />
        <path d="M4.500 1V17M7.500 1V17M10.500 1V17M13.500 1V17M1 4.500H17M1 7.500H17M1 10.500H17M1 13.500H17" stroke="#80858e" />
      </Nav>
      <Nav label="Viewports" caret>
        <path d="M1.500 2.500H8.500V8.500H1.500ZM9.500 2.500H16.500V8.500H9.500ZM1.500 9.500H8.500V15.500H1.500ZM9.500 9.500H16.500V15.500H9.500Z" fill="#b5cdef" stroke="#3f649c" />
        <path d="M3.500 4.500H6.500V6.500H3.500ZM11.500 4.500H14.500V6.500H11.500ZM3.500 11.500H6.500V13.500H3.500ZM11.500 11.500H14.500V13.500H11.500Z" stroke="#86a3ce" />
      </Nav>
    </div>
  </div>
);

/* ---------- timeline ---------- */

const navy = '#2b4470';

const features: Record<string, React.ReactNode> = {
  extrude: (
    <>
      <path d="M.500 4L3 .500H10.500V11L8 15.500H.500Z" fill="#cfdcea" stroke={navy} strokeOpacity=".7" />
      <path d="M3 3H9V12H3Z" fill="#8db0dc" />
      <path d="M13.500 15V3M11.500 4L13.500 1L15.500 4" stroke="#333" fill="none" />
    </>
  ),
  plane: (
    <>
      <path d="M.500 5L4 .500H10L6 5V15.500H.500Z" fill="#f3f4f6" stroke="#555" />
      <path d="M6 5L10 .500V11L6 15.500Z" fill="#6fa867" stroke="#2f5e2a" />
      <path d="M12.500 5L15.500 .500V10L12.500 15.500Z" fill="#e78c58" stroke="#a14f22" />
    </>
  ),
  loft: (
    <>
      <path d="M.500 1.500H15.500V10L11 15H5L.500 10Z" fill="#8db0dc" stroke={navy} />
      <path d="M2.500 2H13.500L10 9.500H6Z" fill="#eaf2fb" stroke={navy} strokeWidth=".6" />
      <circle cx="8" cy="12" r="3.200" fill="#f4f6fa" stroke="#445" />
    </>
  ),
  axis: (
    <>
      <path d="M4.500 4L7 .500H11.500V12L8 15.500H4.500Z" fill="#e9ebef" stroke="#666" strokeDasharray="2 1" />
      <path d="M-2 0L14 16" stroke="#f08020" strokeWidth="1.400" />
      <path d="M2 3.500h3v3H2zM10 11h3v3h-3z" fill="#2f66cf" />
    </>
  ),
  revolve: (
    <>
      <path d="M2 4Q8 -1 14.500 4M1.500 1V4.500H5" fill="none" stroke="#333" />
      <path d="M.500 8Q2 5.500 8 5.500Q14 5.500 15.500 8L14 14Q8 17 2 14Z" fill="#8db0dc" stroke={navy} />
      <path d="M.500 8Q2 5.500 8 5.500Q14 5.500 15.500 8L13 10H3Z" fill="#e3edf8" stroke={navy} strokeWidth=".8" />
    </>
  ),
  split: (
    <>
      <path d="M.500 5.500L3 .500H8.500L11 5H13L15.500 7.500V9.500L13 12.500H6L3.500 10H2L.500 8Z" fill="#bad0ec" stroke={navy} />
      <path d="M3 6.500Q7 10 14.500 7.500" stroke={navy} fill="none" />
      <path d="M6 10.500H11V15.500H6Z" fill="#fff" stroke="#444" />
    </>
  ),
  pattern: (
    <>
      <path d="M8 2V14M2 8H14M4 5L6 3M12 5L10 3M4 11L6 13M12 11L10 13" stroke="#444" />
      <path d="M5.500 1.500L8 .500L10.500 1.500V4.500L8 5.500L5.500 4.500Z" fill="#e9ebef" stroke="#333" />
      <path d="M.500 6.500L3 5.500L5.500 6.500V9.500L3 10.500L.500 9.500ZM10.500 6.500L13 5.500L15.500 6.500V9.500L13 10.500L10.500 9.500ZM5.500 11.500L8 10.500L10.500 11.500V14.500L8 15.500L5.500 14.500Z" fill="#8db0dc" stroke={navy} strokeWidth="1.300" />
    </>
  ),
  fillet: (
    <>
      <path d="M.500 15.500V7L4 2Q6 .500 10 .500Q15 2 15.500 9V12L12 15.500Z" fill="#e9ebef" stroke="#444" />
      <path d="M4.500 2.500Q12 4 12 15L15.500 12V9Q15 2 10 .500Q7 .500 4.500 2.500Z" fill="#8db0dc" stroke={navy} />
    </>
  ),
  draft: (
    <>
      <path d="M.500 15.500V5L4 1.500H7V15.500Z" fill="#e9ebef" stroke="#444" />
      <path d="M4 3L8 1L14 13L10 15.500Z" fill="#6d95cc" stroke={navy} />
      <path d="M15 10L12 2M10.500 4.500L12 1.500L15 3.500" stroke="#333" fill="none" />
    </>
  ),
  combine: (
    <>
      <path d="M5.500 4L8 .500H15.500V8L13 11H10.500V13L8 15.500H.500V8L3 5.500H5.500Z" fill="#8db0dc" stroke={navy} strokeWidth="1.200" />
      <path d="M6.500 4.500H12L15 1.500" stroke="#dbe8f6" fill="none" />
    </>
  ),
  midplane: (
    <>
      <path d="M.500 6L4 3.500H15.500V10L12 13.500H.500Z" fill="#dfe8dc" stroke="#2f5e2a" />
      <path d="M.500 6L4 3.500V11L.500 13.500ZM12 6L15.500 3.500V10L12 13.500Z" fill="#5ba052" />
      <path d="M6 5L9 1V11L6 15.500Z" fill="#efa37a" stroke="#a14f22" />
    </>
  ),
  mirror: (
    <>
      <path d="M.500 1.500L3 .500L4 5H6V11H4L3 14L.500 15.500Z" fill="#e9ebef" stroke="#444" />
      <path d="M15.500 1.500L13 .500L12 5H10V11H12L13 14L15.500 15.500Z" fill="#7ea4d6" stroke={navy} />
      <path d="M8 0V16" stroke="#333" strokeDasharray="3 1" />
    </>
  ),
};

const history = (
  'sketch extrude plane sketch plane sketch loft loft axis extrude extrude plane plane sketch sketch* sketch* revolve split pattern fillet fillet ' +
  'sketch extrude draft sketch extrude plane sketch loft combine sketch extrude midplane mirror sketch revolve fillet mirror sketch extrude pattern ' +
  'combine pattern combine sketch revolve mirror combine fillet fillet extrude fillet'
).split(' ');

const playback = [
  { label: 'Go to start', d: 'M1 1H3V15H1ZM14 2V14L4 8Z' },
  { label: 'Step back', d: 'M11 2V14L1 8ZM12 5H14V11H12Z' },
  { label: 'Play', d: 'M2 0L14 8L2 16Z' },
  { label: 'Step forward', d: 'M2 5H4V11H2ZM5 2L15 8L5 14Z' },
  { label: 'Go to end', d: 'M2 2L12 8L2 14ZM13 1H15V15H13Z' },
];

const Timeline = () => (
  <footer className="bg-[#cdcdcd]">
    <div className="h-[10px] border-t border-[#c4c4c4] bg-[#dcdcdc] pl-1 pt-px">
      <div className="h-[7px] w-[83.5%] rounded-full bg-[#929292]" />
    </div>
    <div className="flex h-10 items-start overflow-hidden">
      <div className="flex gap-[9px] pl-[9px] pt-[7px]">
        {playback.map((p) => (
          <button key={p.label} aria-label={p.label}>
            <svg className="h-4 w-4" viewBox="0 0 16 16">
              <path d={p.d} fill="#4d4d4d" />
            </svg>
          </button>
        ))}
      </div>
      <div className="ml-[17px] mt-[5px]">
        <ol className="flex">
          {history.map((item, i) => {
            const marked = item.endsWith('*');
            const kind = item.replace('*', '');
            return (
              <li key={i} className="flex h-7 w-6 flex-col items-center justify-between">
                <button className={clsx('flex h-6 w-6 items-center justify-center', marked && 'bg-[#e6e620]')} aria-label={`${kind} ${i + 1}`}>
                  {kind === 'sketch' ? <SketchIcon /> : <svg className="h-4 w-4 overflow-visible" viewBox="0 0 16 16">{features[kind]}</svg>}
                </button>
                <span className="h-1 w-0.5 bg-[#666]" />
              </li>
            );
          })}
        </ol>
        <div className="ml-[11px] flex gap-0.5">
          <span className="h-0.5 flex-1 bg-[#666]" />
          <span className="h-0.5 w-1 bg-[#666]" />
          <span className="-mr-1 h-0.5 w-1 bg-[#666]" />
        </div>
      </div>
      <button className="ml-auto mr-1 mt-2 shrink-0" aria-label="Timeline settings">
        <svg className="h-4 w-4" viewBox="0 0 16 16" fill="none" stroke="#5a5a5a">
          <circle cx="8" cy="8" r="4.200" strokeWidth="3.400" />
          <circle cx="8" cy="8" r="6.800" strokeWidth="2.200" strokeDasharray="2.670 2.670" />
        </svg>
      </button>
    </div>
  </footer>
);

const TabBar = () => (
  <header className="flex h-7 flex-col bg-[#d9d9d9]">
    <div className="h-1.5 shrink-0 border-b-2 border-[#999]" />
    <div className="flex flex-1 items-center border-b border-[#999]">
      <div className="flex h-full w-[199px] items-center border-r-2 border-[#999] bg-[#ececec] pl-[9px]">
        <svg className="h-4 w-[18px] shrink-0" viewBox="0 0 18 16">
          <path d="M1 3L9 0L17 3L9 6Z" fill="#5f5f5f" />
          <path d="M1 3L9 6V16L1 12Z" fill="#a2a6a6" />
          <path d="M17 3L9 6V16L17 12Z" fill="#4e4e4e" />
        </svg>
        <a href="#model" className="ml-[9px] text-[13px] font-medium leading-4 text-[#444]">screwdriver v25</a>
        <svg className="ml-auto h-[10px] w-[10px]" viewBox="0 0 10 10">
          <circle cx="5" cy="5" r="4" fill="none" stroke="#6fc4b0" strokeWidth="1.300" />
        </svg>
        <button className="ml-2 mr-1.5" aria-label="Close tab">
          <svg className="h-[10px] w-[10px]" viewBox="0 0 10 10">
            <path d="M1 1L9 9M9 1L1 9" stroke="#7a7a7a" strokeWidth="2.600" />
          </svg>
        </button>
      </div>
      <button className="ml-auto mr-1.5" aria-label="Collapse toolbar">
        <svg className="h-2 w-[14px]" viewBox="0 0 14 8">
          <path d="M1.500 7L7 1.800L12.500 7" fill="none" stroke="#7a7a7a" strokeWidth="2.600" />
        </svg>
      </button>
    </div>
  </header>
);

export default function App() {
  return (
    <div className="flex min-h-screen flex-col overflow-hidden bg-[#ededed] font-['Open_Sans',sans-serif] text-[#333]">
      <TabBar />
      <main className="relative flex flex-1 flex-col">
        <Scene />
        <div className="relative flex flex-1 flex-col p-1">
          <div className="flex items-start justify-between">
            <Toolbar />
            <div className="-mb-16 -mr-0.5 mt-0.5">
              <ViewCube />
            </div>
          </div>
          <div className="mt-1">
            <PanelHeader title="BROWSER" open />
          </div>
          <div className="mt-[3px] flex w-[300px] pl-1">
            <div className="mt-0.5 w-1.5 bg-[#c2c2c2]">
              <div className="h-5/6 rounded-full bg-[#8f8f8f]" />
            </div>
            <ul>
              {tree.map((node) => (
                <TreeRow key={node.name} node={node} />
              ))}
            </ul>
          </div>
          <div className="mt-auto grid grid-cols-[1fr_auto_1fr] items-center pt-4">
            <PanelHeader title="COMMENTS" open={false} />
            <NavBar />
          </div>
        </div>
      </main>
      <Timeline />
    </div>
  );
}
